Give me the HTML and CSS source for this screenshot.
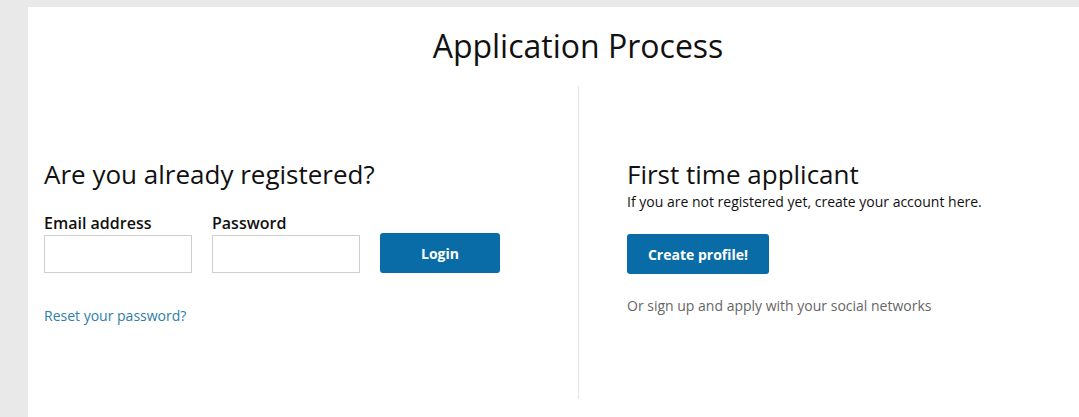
FILE: index.html
```html
<!DOCTYPE html>
<html>
<head>
<meta charset="utf-8">
<link rel="stylesheet" href="styles.css">
</head>
<body>
<div class="panel">
  <h1 class="title">Application Process</h1>
  <div class="columns">
    <div class="col col-left">
      <h2 class="heading">Are you already registered?</h2>
      <form class="login-form">
        <div class="field">
          <label class="label">Email address</label>
          <input class="input" type="text">
        </div>
        <div class="field">
          <label class="label">Password</label>
          <input class="input" type="password">
        </div>
        <button class="btn btn-login" type="button">Login</button>
      </form>
      <a class="reset" href="#">Reset your password?</a>
    </div>
    <div class="col col-right">
      <h2 class="heading">First time applicant</h2>
      <p class="sub">If you are not registered yet, create your account here.</p>
      <button class="btn btn-create" type="button">Create profile!</button>
      <p class="social">Or sign up and apply with your social networks</p>
    </div>
  </div>
</div>
</body>
</html>
```
FILE: styles.css
```css
html, body {
  margin: 0;
  padding: 0;
  background: #e8e9e8;
  font-family: "Open Sans", "Liberation Sans", sans-serif;
  color: #111;
  overflow: hidden;
}
.panel {
  margin: 7px 0 0 28px;
  background: #fff;
  height: 410px;
}
.title {
  margin: 0;
  padding-top: 17px;
  font-size: 32px;
  font-weight: 400;
  text-align: center;
  line-height: 44px;
  width: 1100px;
}
.columns {
  display: flex;
  margin-top: 18px;
}
.col {
  box-sizing: border-box;
  height: 313px;
}
.col-left {
  width: 551px;
  border-right: 1px solid #e4e4e4;
  padding: 70px 0 0 16px;
}
.col-right {
  padding: 70px 0 0 48px;
}
.heading {
  margin: 0;
  font-size: 26px;
  font-weight: 400;
  line-height: 36px;
}
.login-form {
  display: flex;
  align-items: flex-end;
  gap: 20px;
  margin-top: 20px;
}
.field {
  display: flex;
  flex-direction: column;
}
.label {
  font-size: 16px;
  font-weight: 600;
  line-height: 22px;
  margin-bottom: 1px;
}
.input {
  box-sizing: border-box;
  width: 148px;
  height: 38px;
  border: 1px solid #cfcfcf;
  margin: 0;
}
.btn {
  background: #0a6ca6;
  color: #fff;
  border: none;
  border-radius: 3px;
  font-family: "Open Sans", "Liberation Sans", sans-serif;
  font-weight: 700;
  font-size: 14px;
  height: 40px;
  cursor: pointer;
}
.btn-login {
  width: 120px;
}
.reset {
  display: block;
  margin-top: 33px;
  font-size: 14px;
  color: #2d7ea8;
  text-decoration: none;
}
.sub {
  margin: 0;
  font-size: 14px;
  line-height: 20px;
}
.btn-create {
  margin-top: 22px;
  width: 142px;
}
.social {
  margin: 22px 0 0;
  font-size: 14px;
  color: #666;
}
```
